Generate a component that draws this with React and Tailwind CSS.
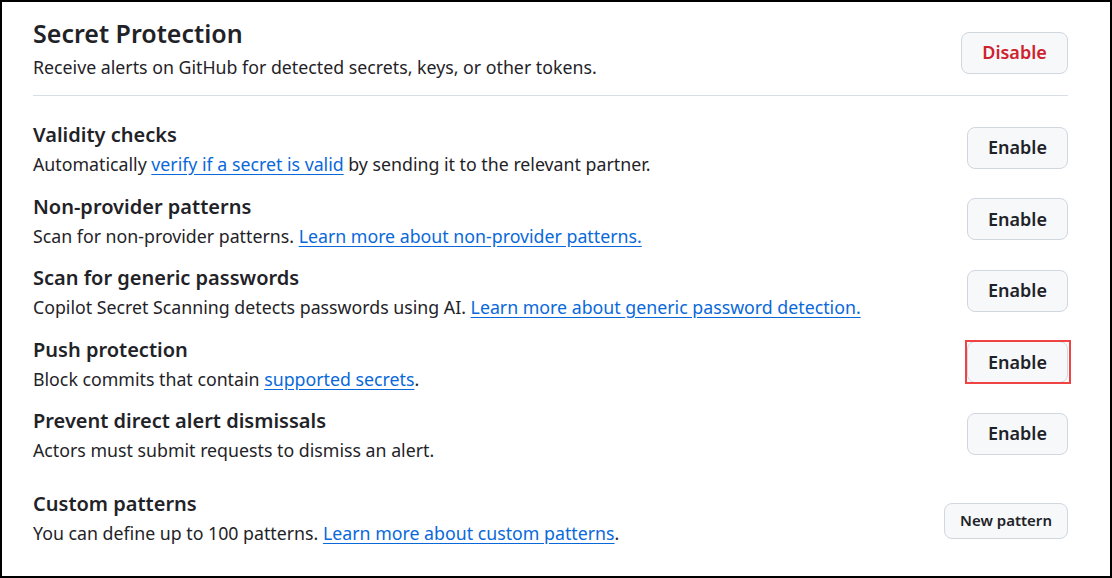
import React from "react";

const FONT = { fontFamily: '"Noto Sans", "Open Sans", sans-serif' };

const ROWS = [
  {
    title: "Validity checks",
    desc: [
      "Automatically ",
      { link: "verify if a secret is valid" },
      " by sending it to the relevant partner.",
    ],
  },
  {
    title: "Non-provider patterns",
    desc: ["Scan for non-provider patterns. ", { link: "Learn more about non-provider patterns." }],
  },
  {
    title: "Scan for generic passwords",
    desc: [
      "Copilot Secret Scanning detects passwords using AI. ",
      { link: "Learn more about " },
      { link: "generic password detection." },
    ],
  },
  {
    title: "Push protection",
    desc: ["Block commits that contain ", { link: "supported secrets" }, "."],
    highlight: true,
  },
  {
    title: "Prevent direct alert dismissals",
    desc: ["Actors must submit requests to dismiss an alert."],
  },
];

function Desc({ parts }) {
  return (
    <p className="text-[17.75px] leading-[28px] text-[#1f2328]">
      {parts.map((p, i) =>
        typeof p === "string" ? (
          <span key={i}>{p}</span>
        ) : (
          <a key={i} href="#" className="text-[#0969da] underline underline-offset-[3px]">
            {p.link}
          </a>
        )
      )}
    </p>
  );
}

function Button({ children, className = "" }) {
  return (
    <button
      type="button"
      className={`rounded-[8px] border border-[#d0d7de] bg-[#f6f8fa] font-semibold ${className}`}
    >
      {children}
    </button>
  );
}

export default function App() {
  return (
    <div
      className="h-[578px] w-[1112px] border-2 border-black bg-white pt-[13px] pl-[31px] pr-[42px]"
      style={FONT}
    >
      <div className="flex items-center justify-between">
        <div>
          <h1 className="text-[25px] leading-[36px] font-semibold text-[#1f2328]">Secret Protection</h1>
          <p className="text-[17.75px] leading-[32px] text-[#1f2328]">
            Receive alerts on GitHub for detected secrets, keys, or other tokens.
          </p>
        </div>
        <Button className="mt-[7px] h-[42px] w-[107px] text-[18px] text-[#cf222e]">Disable</Button>
      </div>

      <div className="mt-[12px] mb-[24px] h-px bg-[#d8dee4]" />

      <div className="flex flex-col gap-[13.5px]">
        {ROWS.map((row) => (
          <div key={row.title} className="flex items-center justify-between">
            <div>
              <h2 className="text-[20px] leading-[30px] font-semibold text-[#1f2328]">{row.title}</h2>
              <Desc parts={row.desc} />
            </div>
            <div className="relative -mt-[3px]">
              <Button className="h-[42px] w-[101px] text-[18px] text-[#1f2328]">Enable</Button>
              {row.highlight && (
                <span className="pointer-events-none absolute -left-[2px] -top-[1px] -right-[3px] -bottom-[1px] border-2 border-[#f04444]" />
              )}
            </div>
          </div>
        ))}
      </div>

      <div className="mt-[25px] flex items-center justify-between">
        <div>
          <h2 className="text-[20px] leading-[30px] font-semibold text-[#1f2328]">Custom patterns</h2>
          <Desc parts={["You can define up to 100 patterns. ", { link: "Learn more about custom patterns" }, "."]} />
        </div>
        <Button className="mt-[5px] h-[36px] w-[124px] text-[15px] text-[#1f2328]">New pattern</Button>
      </div>
    </div>
  );
}
